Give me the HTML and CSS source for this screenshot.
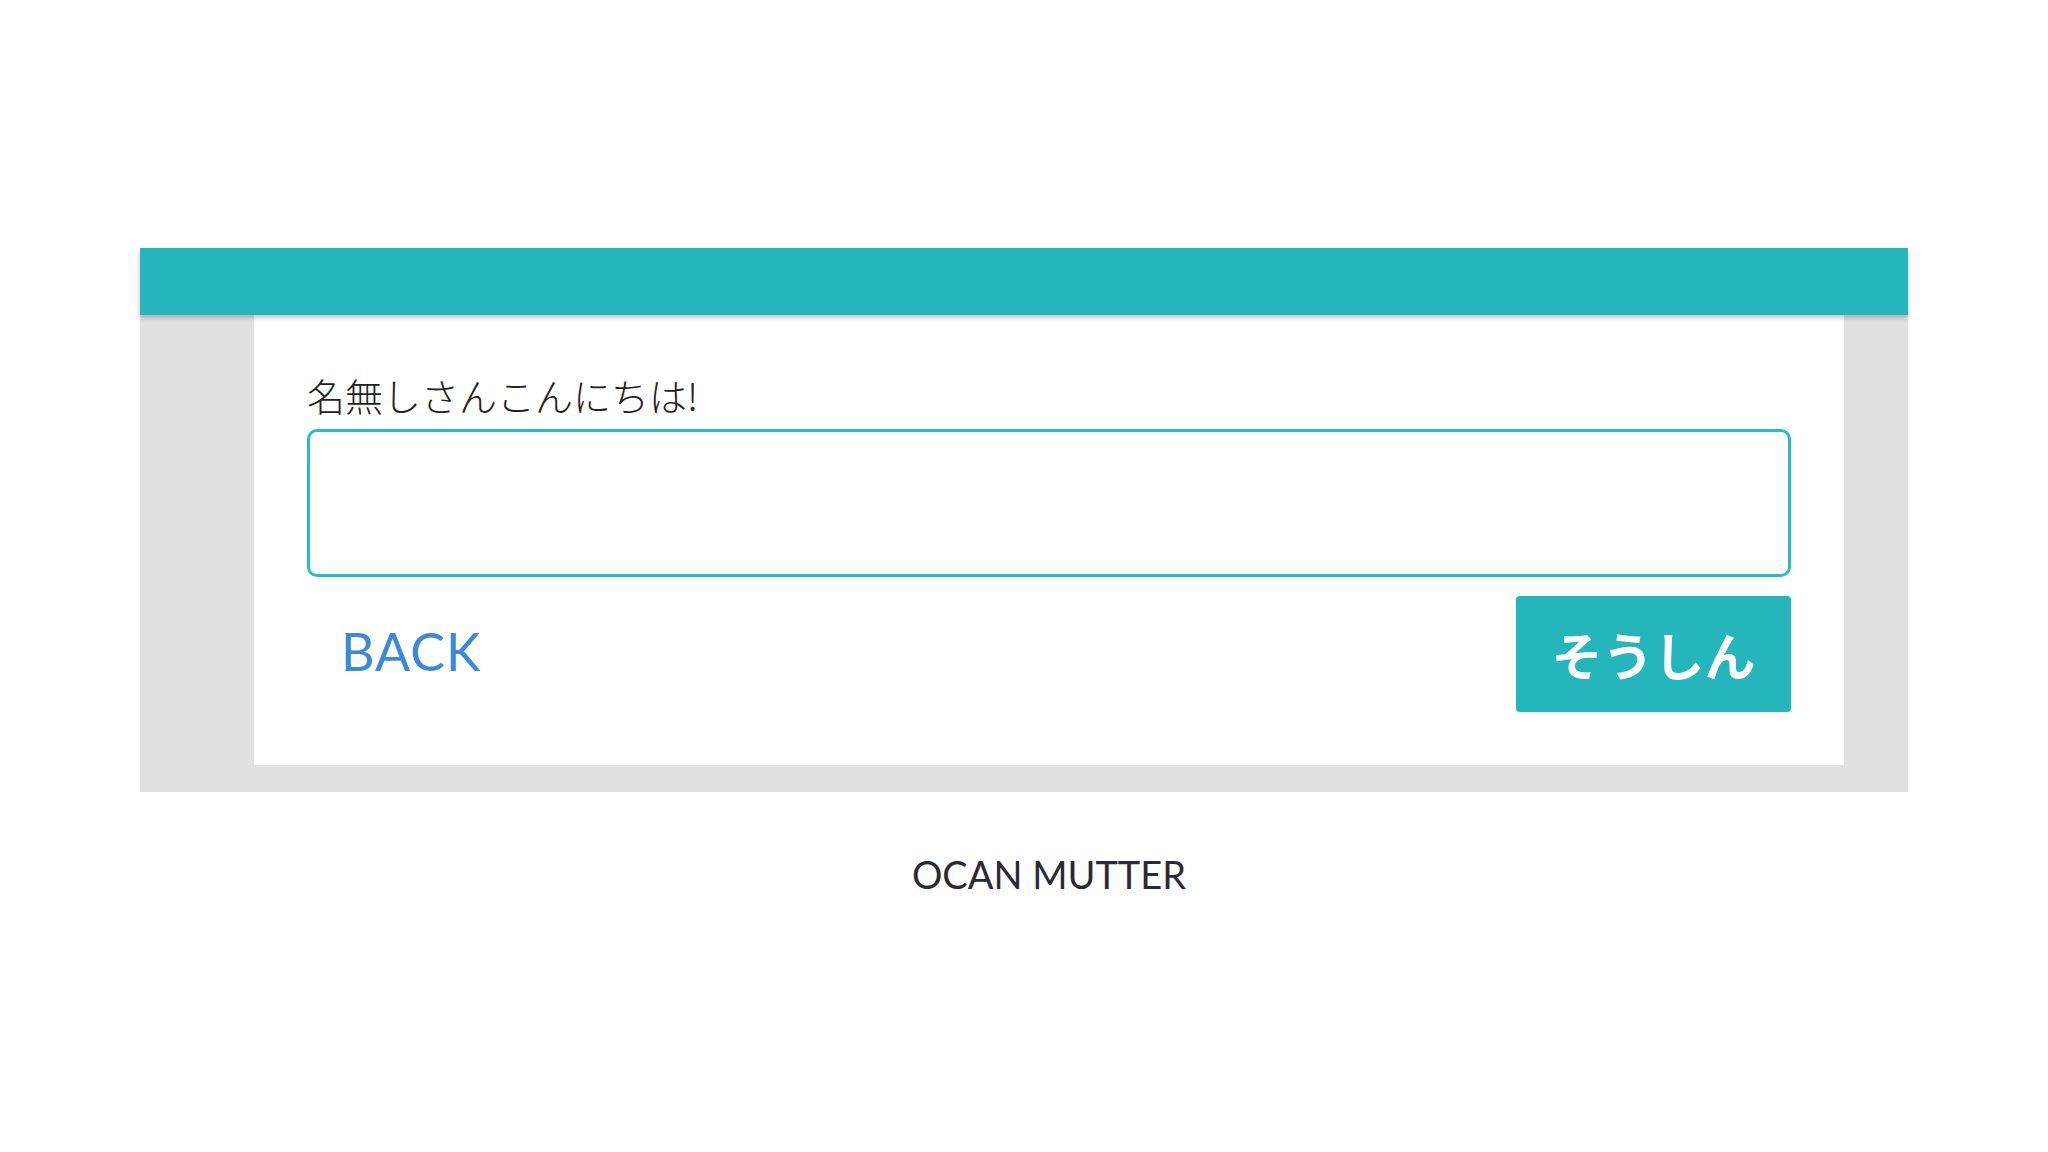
FILE: index.html
```html
<!DOCTYPE html>
<html lang="ja">
<head>
<meta charset="utf-8">
<title>OCAN MUTTER</title>
<link rel="stylesheet" href="styles.css">
</head>
<body>
<div class="wrap">
  <header class="bar"></header>
  <div class="panel">
    <form class="card">
      <label class="label" for="msg">名無しさんこんにちは!</label>
      <textarea id="msg" class="field"></textarea>
      <div class="actions">
        <a class="back" href="#">BACK</a>
        <button type="button" class="send">そうしん</button>
      </div>
    </form>
  </div>
</div>
<footer class="foot">OCAN MUTTER</footer>
</body>
</html>
```
FILE: styles.css
```css
html, body {
  margin: 0;
  padding: 0;
  background: #fefefe;
  font-family: "Noto Sans", "Noto Sans CJK JP", sans-serif;
}
.wrap {
  margin: 248px 0 0 140px;
  width: 1768px;
}
.bar {
  height: 67px;
  background: #25b6bb;
  position: relative;
  z-index: 1;
  box-shadow: 0 3px 5px rgba(0, 0, 0, 0.22);
}
.panel {
  background: #e2e1e2;
  padding: 0 64px 27px 114px;
}
.card {
  background: #ffffff;
  padding: 55px 53px 53px 53px;
  display: flex;
  flex-direction: column;
}
.label {
  font-family: "Noto Sans CJK JP", sans-serif;
  font-weight: 300;
  font-size: 38px;
  line-height: 50px;
  color: #222;
  margin-bottom: 9px;
}
.field {
  box-sizing: border-box;
  height: 148px;
  width: 100%;
  border: 3px solid #2bbcbf;
  border-radius: 10px;
  background: #fff;
  resize: none;
  outline: none;
  margin: 0;
}
.actions {
  margin-top: 19px;
  display: flex;
  justify-content: space-between;
  align-items: center;
}
.back {
  font-family: "Lato", sans-serif;
  font-size: 52px;
  color: #3c88dc;
  text-decoration: none;
  padding-left: 34px;
  margin-bottom: 6px;
  letter-spacing: 1px;
}
.send {
  width: 275px;
  height: 116px;
  border: none;
  border-radius: 4px;
  background: #25b6bb;
  color: #fff;
  font-family: "Noto Sans CJK JP", sans-serif;
  font-weight: 700;
  font-size: 51px;
  padding: 0;
}
.foot {
  text-align: center;
  padding-left: 50px;
  margin-top: 59px;
  font-family: "Lato", sans-serif;
  font-size: 38px;
  color: #2a2a35;
}
```
